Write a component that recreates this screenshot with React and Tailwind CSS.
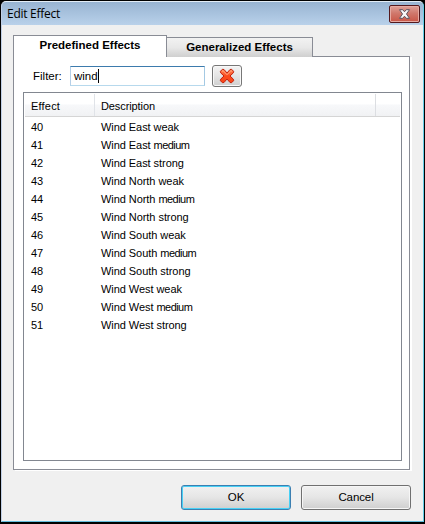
const effects = [
  [40, "East", "weak"],
  [41, "East", "medium"],
  [42, "East", "strong"],
  [43, "North", "weak"],
  [44, "North", "medium"],
  [45, "North", "strong"],
  [46, "South", "weak"],
  [47, "South", "medium"],
  [48, "South", "strong"],
  [49, "West", "weak"],
  [50, "West", "medium"],
  [51, "West", "strong"],
];

function CloseButton() {
  return (
    <button className="mt-[3px] flex h-[18px] w-[31px] items-center justify-center rounded-[2px] border border-[#54191d] bg-linear-to-b from-[#dfa199] from-0% via-[#d0786c] via-45% to-[#c95546] shadow-[inset_0_0_0_1px_#e6aaa2]">
      <svg width="13" height="10" viewBox="0 0 13 10">
        <path d="M1.5 .7H4.7L6.5 2.8L8.3 .7H11.5L8.5 5L11.5 9.3H8.3L6.5 7.2L4.7 9.3H1.5L4.5 5Z" fill="#f7f7f7" stroke="#5c5460" strokeWidth="1" />
      </svg>
    </button>
  );
}

function ClearButton() {
  return (
    <button className="ml-[7px] flex h-[22px] w-[30px] items-center justify-center rounded-[3px] border border-[#777777] bg-linear-to-b from-[#f3f3f3] from-0% via-[#e4e4e4] via-50% to-[#cfcfcf] shadow-[inset_0_0_0_1px_#f8f8f8]">
      <svg width="16" height="16" viewBox="0 0 16 16">
        <defs>
          <linearGradient id="cross" x1="0" y1="0" x2="0" y2="1">
            <stop offset="0" stopColor="#ff8b5c" />
            <stop offset=".5" stopColor="#fb4a1c" />
            <stop offset="1" stopColor="#f9461a" />
          </linearGradient>
        </defs>
        <path d="M3.4 1.3L5 1.5L8 5L11 1.5L12.6 1.3L14.6 3.3L14.3 4.9L11 8L14.3 11.1L14.6 12.7L12.6 14.7L11 14.5L8 11L5 14.5L3.4 14.7L1.4 12.7L1.7 11.1L5 8L1.7 4.9L1.4 3.3Z" fill="url(#cross)" stroke="#c3200c" strokeWidth="1" strokeLinejoin="round" />
        <path d="M3 3.3L4.2 2.8L8 6.8L11.8 2.8L13 3.3" fill="none" stroke="#ffb08c" strokeWidth=".8" />
      </svg>
    </button>
  );
}

export default function App() {
  return (
    <div className="h-[524px] w-[425px] overflow-hidden bg-black pt-px pr-px pb-[2px] pl-px font-['Liberation_Sans',Arial,sans-serif] text-[11px] text-black">
      <div className="flex h-[521px] flex-col rounded-t-[5px] border border-t-[#e3edf6] border-r-[#63cde6] border-b-[#63bcdc] border-l-[#c0cfe6] bg-[#f0f0f0]">
        <header className="flex h-[23px] shrink-0 justify-between rounded-t-[4px] bg-linear-to-b from-[#98b4d2] to-[#b9d1ea] pr-[3px] pl-[5px]">
          <h1 className="pt-[3px] font-['Open_Sans','Noto_Sans',sans-serif] text-[12px] leading-[18px] tracking-[-0.27px]">Edit Effect</h1>
          <CloseButton />
        </header>

        <main className="mt-[10px] ml-[11px] w-[399px]">
          <div className="flex h-[22px] items-end" role="tablist">
            <div role="tab" className="z-10 h-[22px] w-[154px] border-x border-t border-[#898c95] bg-white pt-px text-center text-[11.5px] leading-[16px] font-bold">
              Predefined Effects
            </div>
            <div role="tab" className="-mt-px h-[20px] w-[146px] border-t border-r border-[#898c95] bg-linear-to-b from-[#f2f2f2] from-0% via-[#e8e8e8] via-50% to-[#cfcfcf] pt-px text-center text-[11.5px] leading-[17px] font-bold">
              Generalized Effects
            </div>
          </div>

          <section className="-mt-px h-[414px] w-[397px] border border-[#898c95] bg-white pt-[8px] pl-[9px] shadow-[2px_1px_0_#fff]">
            <div className="flex h-[22px] items-center">
              <label htmlFor="filter" className="w-[47px] pt-[2px] pl-[10px] text-[11.5px]">Filter:</label>
              <div id="filter" className="flex h-[20px] w-[135px] items-center border border-t-[#3d7bad] border-r-[#a4c9e3] border-b-[#b7d9ed] border-l-[#b5cfe7] pl-[3px] text-[11.5px]">
                <span className="pt-[2px]">wind</span>
                <span className="h-[14px] w-px bg-black" />
              </div>
              <ClearButton />
            </div>

            <div className="mt-[5px] h-[369px] w-[379px] border border-[#828790] p-px">
              <div className="flex h-[23px] border-b border-[#d5d5d5] bg-linear-to-b from-white from-45% via-[#f7f8fa] via-50% to-[#f1f2f4] leading-[25px]">
                <span className="w-[70px] border-r border-[#e0e3e8] pl-[6px] tracking-[0.2px]">Effect</span>
                <span className="w-[281px] border-r border-[#dcdee2] pl-[6px] tracking-[-0.1px]">Description</span>
              </div>
              <ul className="pt-px">
                {effects.map(([id, direction, strength]) => (
                  <li key={id} className="flex h-[18px] leading-[18px]">
                    <span className="w-[70px] pl-[6px]">{id}</span>
                    <span className="pl-[6px] tracking-[-0.06px]">
                      Wind {direction}{" "}
                      <span className={strength === "medium" ? "tracking-[-0.55px]" : ""}>{strength}</span>
                    </span>
                  </li>
                ))}
              </ul>
            </div>
          </section>
        </main>

        <footer className="mt-[15px] ml-[179px] flex gap-[10px] text-[11.5px] leading-[23px]">
          <button className="h-[25px] w-[110px] rounded-[3px] border border-[#3c7fb1] bg-linear-to-b from-[#f1f1f1] from-0% via-[#e6e6e6] via-48% to-[#cfcfcf] shadow-[inset_0_0_0_1px_#48d0f5]">OK</button>
          <button className="h-[25px] w-[110px] rounded-[3px] border border-[#707070] bg-linear-to-b from-[#f1f1f1] from-0% via-[#e6e6e6] via-48% to-[#cfcfcf] tracking-[-0.1px] shadow-[inset_0_0_0_1px_#f6f6f6]">Cancel</button>
        </footer>
      </div>
    </div>
  );
}
